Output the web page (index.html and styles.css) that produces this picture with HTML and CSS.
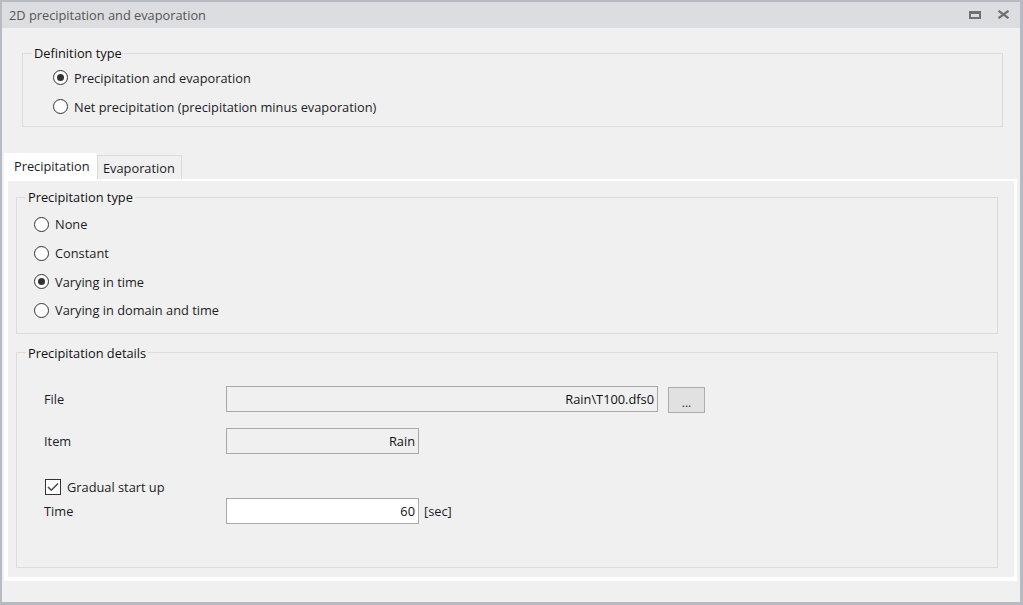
FILE: index.html
```html
<!DOCTYPE html>
<html>
<head>
<meta charset="utf-8">
<link rel="stylesheet" href="styles.css">
</head>
<body>
<div class="window">
  <div class="titlebar">
    <span class="title">2D precipitation and evaporation</span>
    <div class="title-icons">
      <span class="icon-restore"></span>
      <svg class="icon-close" width="13" height="9" viewBox="0 0 13 9"><path d="M1.5 0.8 L11.5 8.2 M11.5 0.8 L1.5 8.2" stroke="#707070" stroke-width="2.2" fill="none"/></svg>
    </div>
  </div>
  <div class="content">
    <fieldset class="group def-group">
      <legend>Definition type</legend>
      <label class="radio-row"><span class="radio checked"></span><span>Precipitation and evaporation</span></label>
      <label class="radio-row"><span class="radio"></span><span>Net precipitation (precipitation minus evaporation)</span></label>
    </fieldset>

    <div class="tabs">
      <div class="tab active">Precipitation</div>
      <div class="tab">Evaporation</div>
    </div>
    <div class="panel">
      <fieldset class="group type-group">
        <legend>Precipitation type</legend>
        <label class="radio-row"><span class="radio"></span><span>None</span></label>
        <label class="radio-row"><span class="radio"></span><span>Constant</span></label>
        <label class="radio-row"><span class="radio checked"></span><span>Varying in time</span></label>
        <label class="radio-row"><span class="radio"></span><span>Varying in domain and time</span></label>
      </fieldset>
      <fieldset class="group details-group">
        <legend>Precipitation details</legend>
        <div class="field-row row-file">
          <span class="field-label">File</span>
          <div class="input readonly file-input">Rain\T100.dfs0</div>
          <div class="browse-btn">...</div>
        </div>
        <div class="field-row row-item">
          <span class="field-label">Item</span>
          <div class="input readonly short-input">Rain</div>
        </div>
        <label class="check-row">
          <span class="checkbox"><svg width="14" height="14" viewBox="0 0 14 14"><path d="M2 7 L5.3 10.3 L12 3.4" stroke="#4a4a4a" stroke-width="1.5" fill="none"/></svg></span>
          <span>Gradual start up</span>
        </label>
        <div class="field-row row-time">
          <span class="field-label">Time</span>
          <div class="input short-input">60</div>
          <span class="unit">[sec]</span>
        </div>
      </fieldset>
    </div>
  </div>
</div>
</body>
</html>
```

FILE: styles.css
```css
* { box-sizing: border-box; }
html, body {
  margin: 0;
  padding: 0;
  width: 1023px;
  height: 605px;
  overflow: hidden;
  background: #f0f0f0;
}
body {
  font-family: "Open Sans", "Noto Sans", "Liberation Sans", sans-serif;
  font-size: 12.8px;
  color: #1c1c26;
}
.window {
  width: 1023px;
  height: 605px;
  border: 2px solid #b7bac0;
  border-right-width: 3px;
  border-bottom-width: 3px;
  display: flex;
  flex-direction: column;
  background: #f0f0f0;
}
.titlebar {
  height: 26px;
  background: #dcdde0;
  display: flex;
  align-items: center;
  justify-content: space-between;
  padding: 0 10px 0 7px;
  flex: none;
}
.title {
  color: #555;
}
.title-icons {
  display: flex;
  align-items: center;
  gap: 16px;
  margin-top: -1px;
}
.icon-restore {
  display: block;
  width: 12px;
  height: 8px;
  border: 2px solid #707070;
  border-top-width: 3px;
}
.icon-close { display: block; }
.content {
  flex: 1;
  display: flex;
  flex-direction: column;
  padding: 0 0 21px 0;
}
.group {
  border: 1px solid #dcdcdc;
  margin: 0;
  min-width: 0;
}
.group legend {
  padding: 0 2px;
  line-height: 16px;
  height: 16px;
  color: #111;
}
.def-group {
  margin: 17px 17px 0 20px;
  padding: 2px 0 5px 30px;
}
.def-group legend { margin-left: -21px; }
.radio-row {
  display: flex;
  align-items: center;
  height: 29px;
  gap: 6px;
}
.radio {
  width: 15px;
  height: 15px;
  border-radius: 50%;
  border: 1px solid #333;
  background: #fff;
  display: flex;
  align-items: center;
  justify-content: center;
  flex: none;
}
.radio.checked::after {
  content: "";
  width: 7px;
  height: 7px;
  border-radius: 50%;
  background: #333;
}
.tabs {
  display: flex;
  align-items: flex-end;
  margin: 26px 0 0 2px;
  height: 26px;
  flex: none;
}
.tab {
  height: 24px;
  padding: 1px 6px 0 5px;
  display: flex;
  align-items: center;
  border: 1px solid #dadada;
  border-bottom: none;
  background: #f0f0f0;
}
.tab.active {
  height: 26px;
  background: #fff;
  border-color: #fff;
  padding: 0 6px 2px 9px;
  width: 93px;
}
.panel {
  flex: 1;
  margin: 0 3px 0 2px;
  background: #f0f0f0;
  border-style: solid;
  border-color: #fff;
  border-width: 2px 3px 4px 4px;
  display: flex;
  flex-direction: column;
  padding: 8px 16px 9px 8px;
}
.type-group {
  padding: 5px 0 8px 17px;
}
.type-group legend { margin-left: -8px; }
.type-group .radio-row { height: 28.7px; }
.details-group {
  margin-top: 11px;
  flex: 1;
  padding: 0 0 0 27px;
}
.details-group legend { margin-left: -18px; }
.field-row {
  display: flex;
  align-items: center;
}
.field-label {
  width: 182px;
  flex: none;
}
.input {
  height: 26px;
  border: 1px solid #a9a9a9;
  background: #fff;
  display: flex;
  align-items: center;
  justify-content: flex-end;
  padding-right: 3px;
  color: #111;
}
.input.readonly { background: #f0f0f0; }
.file-input { width: 432px; }
.short-input { width: 193px; }
.browse-btn {
  width: 37px;
  height: 26px;
  margin-left: 10px;
  margin-top: 2px;
  background: #e1e1e1;
  border: 1px solid #adadad;
  display: flex;
  align-items: center;
  justify-content: center;
  font-size: 12px;
  color: #333;
  padding-top: 5px;
}
.row-file { margin-top: 24px; }
.row-item { margin-top: 15px; }
.check-row {
  display: flex;
  align-items: center;
  gap: 6px;
  margin-top: 25px;
  margin-left: 1px;
  height: 16px;
}
.checkbox {
  width: 16px;
  height: 16px;
  border: 1px solid #333;
  background: #fff;
  display: flex;
  align-items: center;
  justify-content: center;
  flex: none;
}
.checkbox svg { display: block; }
.row-time { margin-top: 3px; }
.unit { margin-left: 5px; }
```
